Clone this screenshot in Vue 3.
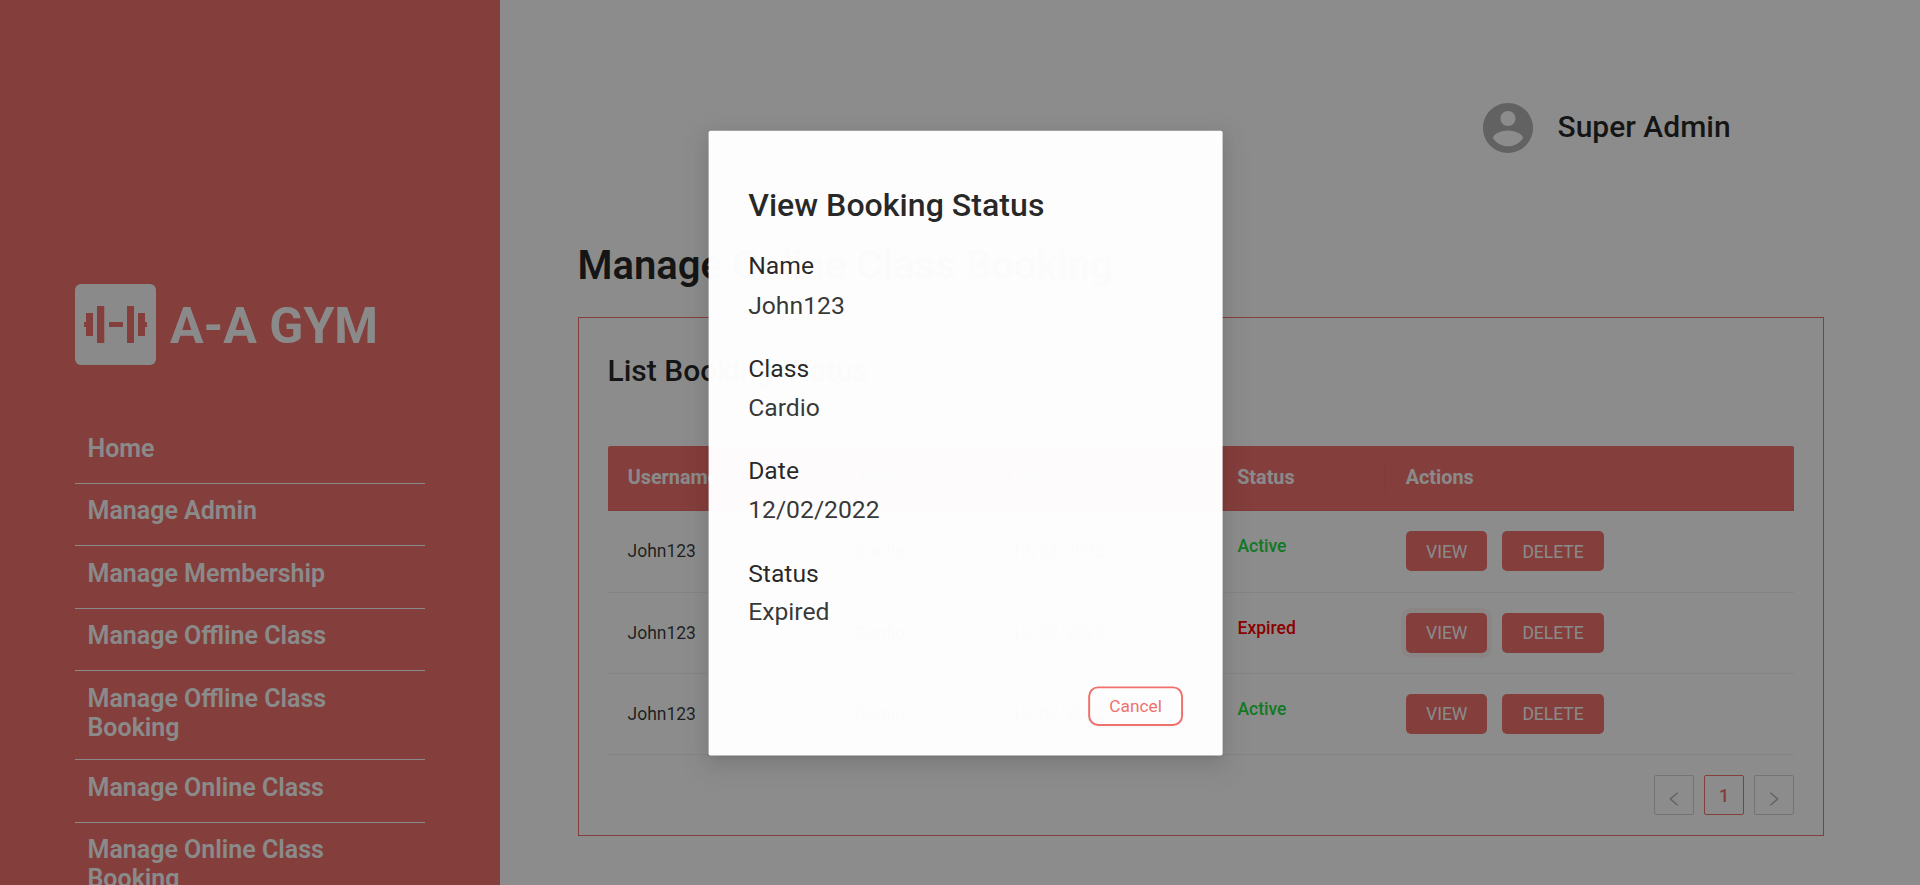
<script setup>
const menu = [
  { label: 'Home' },
  { label: 'Manage Admin' },
  { label: 'Manage Membership' },
  { label: 'Manage Offline Class' },
  { label: 'Manage Offline Class Booking', tall: true },
  { label: 'Manage Online Class' },
  { label: 'Manage Online Class Booking', tall: true },
]
const rows = [
  { user: 'John123', cls: 'Cardio', date: '12/02/2022', status: 'Active' },
  { user: 'John123', cls: 'Cardio', date: '12/02/2022', status: 'Expired', focused: true },
  { user: 'John123', cls: 'Cardio', date: '12/02/2022', status: 'Active' },
]
const headers = ['Username', 'Class', 'Date', 'Status', 'Actions']
const details = [
  ['Name', 'John123'],
  ['Class', 'Cardio'],
  ['Date', '12/02/2022'],
  ['Status', 'Expired'],
]
</script>

<template>
  <div class="page">
    <aside class="sidebar">
      <div class="brand">
        <svg class="brand-mark" viewBox="0 0 81 81">
          <rect width="81" height="81" rx="6" fill="#fcfcfc" />
          <g fill="#f1716d">
            <rect x="9" y="38" width="3" height="5" />
            <rect x="11" y="29" width="7" height="23" />
            <rect x="22" y="22" width="7.3" height="37" />
            <rect x="34" y="38" width="14" height="5" />
            <rect x="52" y="22" width="7" height="37" />
            <rect x="63" y="29" width="7" height="23" />
            <rect x="69" y="38" width="3" height="5" />
          </g>
        </svg>
        <span class="brand-name">A-A GYM</span>
      </div>
      <nav class="menu">
        <a v-for="m in menu" :key="m.label" class="menu-item" :class="{ tall: m.tall }">{{ m.label }}</a>
      </nav>
    </aside>

    <main class="main">
      <header class="user">
        <svg class="avatar" viewBox="0 0 24 24" fill="#b3b3b3">
          <path d="M12 2C6.48 2 2 6.48 2 12s4.48 10 10 10 10-4.48 10-10S17.52 2 12 2zm0 3.2c1.66 0 3 1.34 3 3s-1.34 3-3 3-3-1.34-3-3 1.34-3 3-3zm0 14.1c-2.5 0-4.71-1.28-6-3.22.03-1.99 4-3.08 6-3.08 1.99 0 5.97 1.09 6 3.08-1.29 1.94-3.5 3.22-6 3.22z" />
        </svg>
        <span class="user-name">Super Admin</span>
      </header>
      <h1 class="title">Manage Online Class Booking</h1>
      <section class="card">
        <h2 class="subtitle">List Booking Status</h2>
        <div class="grid head">
          <div v-for="h in headers" :key="h" class="th">{{ h }}</div>
        </div>
        <div v-for="(r, i) in rows" :key="i" class="grid row">
          <div class="td">{{ r.user }}</div>
          <div class="td">{{ r.cls }}</div>
          <div class="td">{{ r.date }}</div>
          <div class="td status" :class="r.status.toLowerCase()">{{ r.status }}</div>
          <div class="td actions">
            <button class="btn" :class="{ focused: r.focused }">VIEW</button>
            <button class="btn">DELETE</button>
          </div>
        </div>
        <div class="pager">
          <span class="page-btn">
            <svg viewBox="0 0 10 16"><path d="M8.6 1.8 1.4 8l7.2 6.2" /></svg>
          </span>
          <span class="page-btn current">1</span>
          <span class="page-btn">
            <svg viewBox="0 0 10 16"><path d="M1.4 1.8 8.6 8l-7.2 6.2" /></svg>
          </span>
        </div>
      </section>
    </main>

    <div class="mask"></div>
    <div class="modal">
      <h3 class="modal-title">View Booking Status</h3>
      <div v-for="d in details" :key="d[0]" class="field">
        <div class="field-label">{{ d[0] }}</div>
        <div class="field-value">{{ d[1] }}</div>
      </div>
      <div class="modal-foot"><button class="cancel">Cancel</button></div>
    </div>
  </div>
</template>

<style>
body { margin: 0; overflow: hidden; }
</style>

<style scoped>
.page {
  position: relative;
  display: flex;
  width: 1920px;
  height: 885px;
  overflow: hidden;
  background: #fff;
  color: rgba(0, 0, 0, 0.85);
  font-family: Roboto, "Liberation Sans", sans-serif;
}
.page * { box-sizing: border-box; }
button { font-family: inherit; }
.sidebar {
  width: 500px;
  flex: none;
  padding: 284px 75px 0;
  background: #f1716d;
}
.brand { display: flex; align-items: center; gap: 14px; height: 81px; }
.brand-mark { width: 81px; height: 81px; }
.brand-name { padding-top: 3px; color: #fcfcfc; font-size: 50px; font-weight: 700; line-height: 81px; }
.menu { display: flex; flex-direction: column; margin-top: 56.7px; }
.menu-item {
  flex: none;
  height: 62.4px;
  padding: 12.4px 60px 0 12.5px;
  border-bottom: 1px solid #fcfcfc;
  color: #fcfcfc;
  font-size: 25px;
  font-weight: 600;
  line-height: 29px;
}
.menu-item.tall { height: 89px; padding-top: 12.6px; }
.main { width: 1246px; margin-left: 78px; }
.user { display: flex; align-items: center; gap: 19.5px; height: 60px; margin: 98px 0 0 900px; }
.avatar { width: 60px; height: 60px; }
.user-name { font-size: 30px; font-weight: 500; line-height: 47px; margin-bottom: 4px; }
.title { margin: 76px 0 0 -0.5px; font-size: 40px; font-weight: 600; line-height: 63px; height: 83px; }
.card { height: 519px; padding: 29px; border: 1px solid #f1716d; }
.subtitle { margin: 0 0 0 -0.5px; height: 99px; font-size: 30px; font-weight: 500; line-height: 47px; }
.grid { display: grid; grid-template-columns: 227px 157px 225.5px 168.5px 408px; }
.head {
  height: 65.3px;
  border-bottom: 1px solid #e96d69;
  border-radius: 2px 2px 0 0;
  background: #f1716d;
}
.th { position: relative; padding-left: 19.7px; color: #fcfcfc; font-size: 19.8px; font-weight: 700; line-height: 63.6px; }
.th:not(:last-child)::after {
  content: "";
  position: absolute;
  right: 0;
  top: 16px;
  width: 1px;
  height: 32px;
  background: rgba(0, 0, 0, 0.06);
}
.row { height: 81.3px; border-bottom: 1px solid #f0f0f0; }
.td { padding-left: 19.5px; color: rgba(0, 0, 0, 0.78); font-size: 17.5px; line-height: 80px; }
.td.status { padding-left: 20px; font-weight: 500; line-height: 71px; }
.td.active { color: #22dc41; }
.td.expired { color: #f00; }
.td.actions { display: flex; gap: 15px; padding: 20px 0 0 20px; }
.btn {
  height: 40px;
  padding: 1px 20px 0;
  border: 0;
  border-radius: 5px;
  background: #f1716d;
  color: #fcfcfc;
  font-size: 17.5px;
  line-height: 38px;
}
.btn.focused { box-shadow: 0 0 0 5px rgba(241, 113, 109, 0.08); }
.pager { display: flex; justify-content: flex-end; gap: 10px; margin-top: 20px; }
.page-btn {
  display: flex;
  align-items: center;
  justify-content: center;
  width: 40px;
  height: 40px;
  border: 1px solid #d4d4d4;
  border-radius: 2px;
  font-size: 18px;
}
.page-btn svg { width: 10px; height: 16px; margin-top: 8px; fill: none; stroke: #b4b4b4; stroke-width: 1.5; }
.page-btn.current { border-color: #f1716d; color: #f1716d; font-weight: 500; }
.mask { position: absolute; inset: 0; background: rgba(0, 0, 0, 0.45); }
.modal {
  position: absolute;
  left: 700px;
  top: 125px;
  width: 520px;
  height: 631.6px;
  padding: 40px;
  border-radius: 2px;
  background: #fff;
  opacity: 0.986;
  transform: scale(0.98847);
  transform-origin: 746px 508px;
  box-shadow: 0 3px 6px -4px rgba(0, 0, 0, 0.12), 0 6px 16px 0 rgba(0, 0, 0, 0.08), 0 9px 28px 8px rgba(0, 0, 0, 0.05);
}
.modal-title { margin: 10px 0 0; height: 67.3px; font-size: 32.5px; font-weight: 500; line-height: 51px; }
.field { margin-bottom: 24.6px; font-size: 25px; line-height: 39.4px; }
.field-value { color: rgba(0, 0, 0, 0.8); }
.modal-foot { display: flex; justify-content: flex-end; margin-top: 55.8px; }
.cancel {
  width: 96px;
  height: 40px;
  padding: 0;
  border: 2px solid #f1716d;
  border-radius: 10px;
  background: #fff;
  color: #f1716d;
  font-size: 17.5px;
  box-shadow: 0 2px 0 rgba(0, 0, 0, 0.016);
}
</style>
